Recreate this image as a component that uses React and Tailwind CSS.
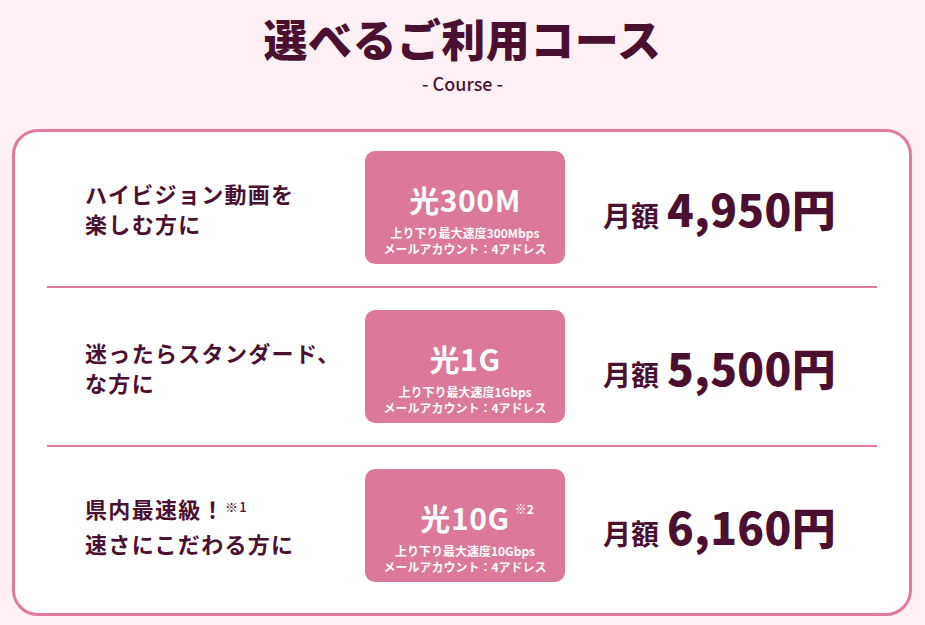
import React from "react";

const font = { fontFamily: '"Noto Sans CJK JP", "Noto Sans", sans-serif' };

const rows = [
  {
    lines: ["ハイビジョン動画を", "楽しむ方に"],
    name: "光300M",
    speed: "上り下り最大速度300Mbps",
    price: "4,950円",
  },
  {
    lines: ["迷ったらスタンダード、", "な方に"],
    name: "光1G",
    speed: "上り下り最大速度1Gbps",
    price: "5,500円",
  },
  {
    lines: ["県内最速級！", "速さにこだわる方に"],
    note1: true,
    name: "光10G",
    note2: true,
    speed: "上り下り最大速度10Gbps",
    price: "6,160円",
  },
];

function Row({ r, first, last }) {
  return (
    <div
      className={`flex items-center ${first ? "pt-[19px] pb-[22px]" : last ? "pt-[22px] pb-[31px]" : "py-[22px]"} ${last ? "" : "border-b-2 border-[#e07b9c]"}`}
    >
      <div className="w-[318px] pl-[38px] text-[22px] font-bold leading-[30px] tracking-[0.06em] text-[#4b1030]">
        <div>
          {r.lines[0]}
          {r.note1 && (
            <span className="relative -top-[6px] text-[13px] font-medium tracking-[0.1em]">※1</span>
          )}
        </div>
        <div>{r.lines[1]}</div>
      </div>
      <div className="flex h-[113px] w-[200px] flex-col items-center rounded-[10px] bg-[#dc7899] pt-[30px] text-white">
        <div className="relative text-[30px] font-bold leading-[36px] tracking-[0.02em]">
          {r.name}
          {r.note2 && (
            <span className="absolute left-full top-[3px] ml-[5px] text-[12px] font-bold leading-[14px] tracking-normal">※2</span>
          )}
        </div>
        <div className="mt-[8px] text-center text-[12px] font-bold leading-[16px]">
          <div>{r.speed}</div>
          <div>メールアカウント：4アドレス</div>
        </div>
      </div>
      <div className="ml-[38px] flex items-baseline text-[#4b1030]">
        <span className="text-[28px] font-bold">月額</span>
        <span className="ml-[8px] text-[44px] font-black tracking-[0.01em]">{r.price}</span>
      </div>
    </div>
  );
}

export default function App() {
  return (
    <div style={font} className="min-h-[625px] w-[925px] bg-[#fff0f5] pt-[11px]">
      <h1 className="text-center text-[44px] font-black leading-[54px] tracking-[0.01em] text-[#4b1030]">
        選べるご利用コース
      </h1>
      <p className="mt-[6px] text-center text-[18px] font-medium leading-[24px] text-[#4b1030]">- Course -</p>
      <div className="mx-[12px] mt-[34px] w-[900px] rounded-[26px] border-[3px] border-[#e07b9c] bg-white px-[32px]">
        {rows.map((r, i) => (
          <Row key={i} r={r} first={i === 0} last={i === rows.length - 1} />
        ))}
      </div>
    </div>
  );
}
